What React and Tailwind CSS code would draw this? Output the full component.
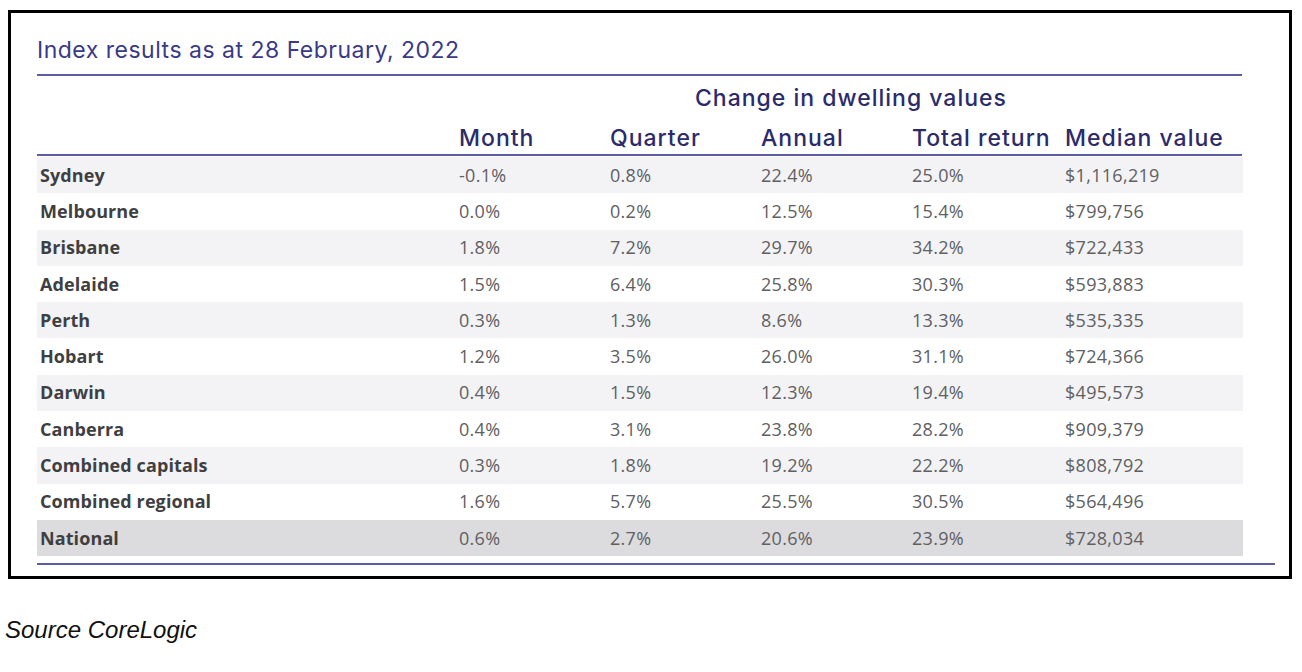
import React from "react";

const rows = [
  ["Sydney", "-0.1%", "0.8%", "22.4%", "25.0%", "$1,116,219"],
  ["Melbourne", "0.0%", "0.2%", "12.5%", "15.4%", "$799,756"],
  ["Brisbane", "1.8%", "7.2%", "29.7%", "34.2%", "$722,433"],
  ["Adelaide", "1.5%", "6.4%", "25.8%", "30.3%", "$593,883"],
  ["Perth", "0.3%", "1.3%", "8.6%", "13.3%", "$535,335"],
  ["Hobart", "1.2%", "3.5%", "26.0%", "31.1%", "$724,366"],
  ["Darwin", "0.4%", "1.5%", "12.3%", "19.4%", "$495,573"],
  ["Canberra", "0.4%", "3.1%", "23.8%", "28.2%", "$909,379"],
  ["Combined capitals", "0.3%", "1.8%", "19.2%", "22.2%", "$808,792"],
  ["Combined regional", "1.6%", "5.7%", "25.5%", "30.5%", "$564,496"],
  ["National", "0.6%", "2.7%", "20.6%", "23.9%", "$728,034"],
];

const cols = "grid grid-cols-[422px_151px_151px_151px_153px_177px]";

const App = () => {
  return (
    <div className="w-[1302px] h-[672px] bg-white pt-[10px] pl-[8px]">
      <div className="w-[1284px] h-[569px] border-[3px] border-black pl-[26px] pt-[22px]">
        <h2 className="font-['Inter',sans-serif] text-[23px] leading-[30px] text-[#3a3a88] tracking-[0.5px]">
          Index results as at 28 February, 2022
        </h2>
        <div className="w-[1205px] h-[2px] bg-[#5c5ca3] mt-[9px]" />
        <div className="font-['Inter',sans-serif] text-[#2b2b6c] font-medium">
          <div className="w-[1205px] flex mt-[7px] h-[30px] leading-[30px] text-[23px]">
            <div className="w-[658px]" />
            <div className="tracking-[1px]">Change in dwelling values</div>
          </div>
          <div className={`${cols} mt-[10px] h-[30px] leading-[30px] text-[23px] tracking-[1px]`}>
            <div />
            <div>Month</div>
            <div>Quarter</div>
            <div>Annual</div>
            <div className="whitespace-nowrap">Total return</div>
            <div className="whitespace-nowrap">Median value</div>
          </div>
        </div>
        <div className="w-[1205px] h-[2px] bg-[#5c5ca3] mt-[1px]" />
        <div className="mt-[1px] w-[1206px] font-['Open_Sans',sans-serif] text-[18px]">
          {rows.map((r, i) => {
            const bg =
              i === rows.length - 1
                ? "bg-[#dcdcde]"
                : i % 2 === 0
                ? "bg-[#f3f3f5]"
                : "bg-white";
            return (
              <div key={r[0]} className={`${cols} h-[36.3px] items-center ${bg}`}>
                <div className="pl-[3px] font-bold tracking-[0.1px] text-[#3f3f42]">{r[0]}</div>
                {r.slice(1).map((c, j) => (
                  <div key={j} className="tracking-[0.3px] text-[#606063]">{c}</div>
                ))}
              </div>
            );
          })}
        </div>
        <div className="w-[1238px] h-[2px] bg-[#5c5ca3] mt-[7px]" />
      </div>
      <p className="font-['Liberation_Sans',sans-serif] italic text-[24px] text-[#111] mt-[33px] -ml-[3px]">
        Source CoreLogic
      </p>
    </div>
  );
};

export default App;
